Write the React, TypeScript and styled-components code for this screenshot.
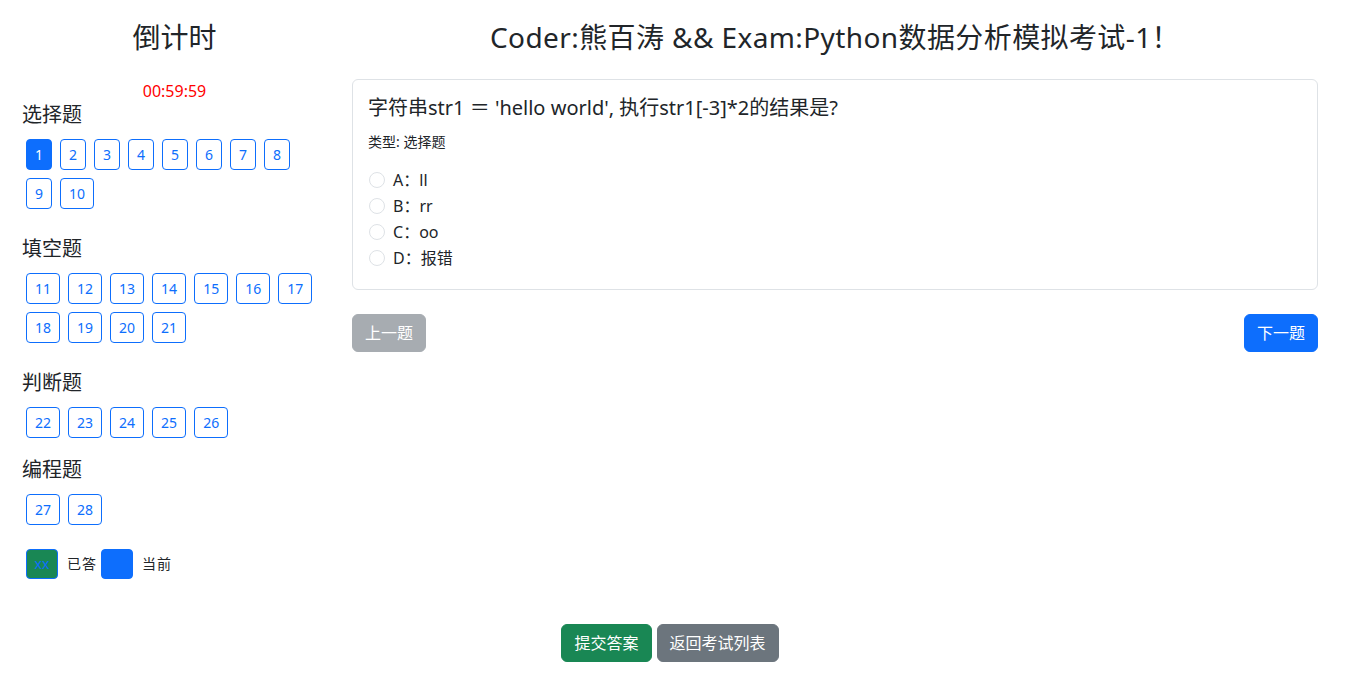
import React from "react";
import styled, { createGlobalStyle } from "styled-components";

const GlobalStyle = createGlobalStyle`
  body {
    margin: 0;
    background: #fff;
    color: #212529;
    font-family: "Segoe UI", "Noto Sans", "Noto Sans CJK SC", sans-serif;
    font-size: 16px;
    line-height: 1.5;
  }
  * { box-sizing: border-box; }
`;

interface Section {
  title: string;
  numbers: number[];
  gap: number;
}

const sections: Section[] = [
  { title: "选择题", numbers: [1, 2, 3, 4, 5, 6, 7, 8, 9, 10], gap: 24 },
  { title: "填空题", numbers: [11, 12, 13, 14, 15, 16, 17, 18, 19, 20, 21], gap: 24 },
  { title: "判断题", numbers: [22, 23, 24, 25, 26], gap: 16 },
  { title: "编程题", numbers: [27, 28], gap: 20 },
];

const options = [
  { key: "A", text: "ll" },
  { key: "B", text: "rr" },
  { key: "C", text: "oo" },
  { key: "D", text: "报错" },
];

const App: React.FC = () => {
  const current = 1;
  return (
    <>
      <GlobalStyle />
      <Page>
        <Main>
          <Sidebar>
            <Heading>倒计时</Heading>
            <Timer>00:59:59</Timer>
            {sections.map((s) => (
              <Group key={s.title} $gap={s.gap}>
                <GroupTitle>{s.title}</GroupTitle>
                <NumberGrid>
                  {s.numbers.map((n) => (
                    <NumberButton key={n} $active={n === current}>
                      {n}
                    </NumberButton>
                  ))}
                </NumberGrid>
              </Group>
            ))}
            <Legend>
              <LegendBox $color="#198754">xx</LegendBox>
              <LegendText>已答</LegendText>
              <LegendBox $color="#0d6efd">xx</LegendBox>
              <LegendText>当前</LegendText>
            </Legend>
          </Sidebar>
          <Content>
            <Heading $spacing={0.4}>Coder:熊百涛 &amp;&amp; Exam:Python数据分析模拟考试-1！</Heading>
            <Card>
              <Question>字符串str1 ＝ 'hello world', 执行str1[-3]*2的结果是?</Question>
              <QuestionType>类型: 选择题</QuestionType>
              {options.map((o) => (
                <Option key={o.key}>
                  <Radio type="radio" name="answer" />
                  <span>
                    {o.key}：{o.text}
                  </span>
                </Option>
              ))}
            </Card>
            <NavRow>
              <Button $variant="disabled">上一题</Button>
              <Button $variant="primary">下一题</Button>
            </NavRow>
          </Content>
        </Main>
        <Footer>
          <Button $variant="success">提交答案</Button>
          <Button $variant="secondary">返回考试列表</Button>
        </Footer>
      </Page>
    </>
  );
};

const Page = styled.div`
  padding: 21px 27px 0 22px;
`;

const Main = styled.div`
  display: grid;
  grid-template-columns: 305px 1fr;
  column-gap: 25px;
`;

const Sidebar = styled.div`
  display: flex;
  flex-direction: column;
`;

const Content = styled.div`
  display: flex;
  flex-direction: column;
`;

const Heading = styled.h3<{ $spacing?: number }>`
  margin: 0;
  font-size: 28px;
  font-weight: 400;
  line-height: 1.2;
  letter-spacing: ${(p) => p.$spacing ?? 0}px;
  text-align: center;
`;

const Timer = styled.div`
  margin-top: 24px;
  color: red;
  text-align: center;
  line-height: 24px;
`;

const Group = styled.div<{ $gap: number }>`
  margin-bottom: ${(p) => p.$gap}px;
`;

const GroupTitle = styled.h5`
  margin: 0 0 8px;
  font-size: 20px;
  font-weight: 400;
  line-height: 1.2;
`;

const NumberGrid = styled.div`
  display: flex;
  flex-wrap: wrap;
`;

const NumberButton = styled.button<{ $active?: boolean }>`
  margin: 4px;
  padding: 4px 8px;
  font-family: inherit;
  font-size: 14px;
  line-height: 21px;
  border: 1px solid #0d6efd;
  border-radius: 4px;
  background: ${(p) => (p.$active ? "#0d6efd" : "#fff")};
  color: ${(p) => (p.$active ? "#fff" : "#0d6efd")};
  cursor: pointer;
`;

const Legend = styled.div`
  display: flex;
  align-items: center;
  padding-left: 4px;
`;

const LegendBox = styled.span<{ $color: string }>`
  display: inline-block;
  width: 32px;
  padding: 4px 0;
  font-size: 14px;
  line-height: 20px;
  text-align: center;
  border: 1px solid #0d6efd;
  border-radius: 4px;
  background: ${(p) => p.$color};
  color: #0d6efd;
`;

const LegendText = styled.span`
  margin: 0 4px 0 9px;
  font-size: 14px;
  letter-spacing: 1px;
`;

const Card = styled.div`
  margin-top: 24px;
  padding: 16px 16px 17px;
  border: 1px solid #dee2e6;
  border-radius: 6px;
`;

const Question = styled.h5`
  margin: 0 0 11px -1px;
  font-size: 20px;
  font-weight: 400;
  line-height: 1.2;
`;

const QuestionType = styled.p`
  margin: 0 0 16px -1px;
  font-size: 14px;
  line-height: 21px;
`;

const Option = styled.label`
  display: flex;
  align-items: center;
  gap: 8px;
  min-height: 24px;
  margin-bottom: 2px;
`;

const Radio = styled.input`
  appearance: none;
  width: 16px;
  height: 16px;
  margin: 0;
  border: 1px solid #dee2e6;
  border-radius: 50%;
  background: #fff;
`;

const NavRow = styled.div`
  display: flex;
  justify-content: space-between;
  margin-top: 24px;
`;

const variants: Record<string, { bg: string; border: string }> = {
  primary: { bg: "#0d6efd", border: "#0d6efd" },
  success: { bg: "#198754", border: "#198754" },
  secondary: { bg: "#6c757d", border: "#6c757d" },
  disabled: { bg: "#a7acb1", border: "#a7acb1" },
};

const Button = styled.button<{ $variant: string }>`
  padding: 6px 12px;
  font-family: inherit;
  font-size: 16px;
  line-height: 24px;
  color: #fff;
  background: ${(p) => variants[p.$variant].bg};
  border: 1px solid ${(p) => variants[p.$variant].border};
  border-radius: 6px;
  cursor: pointer;
`;

const Footer = styled.div`
  display: flex;
  justify-content: center;
  gap: 5px;
  margin-top: 45px;
`;

export default App;
